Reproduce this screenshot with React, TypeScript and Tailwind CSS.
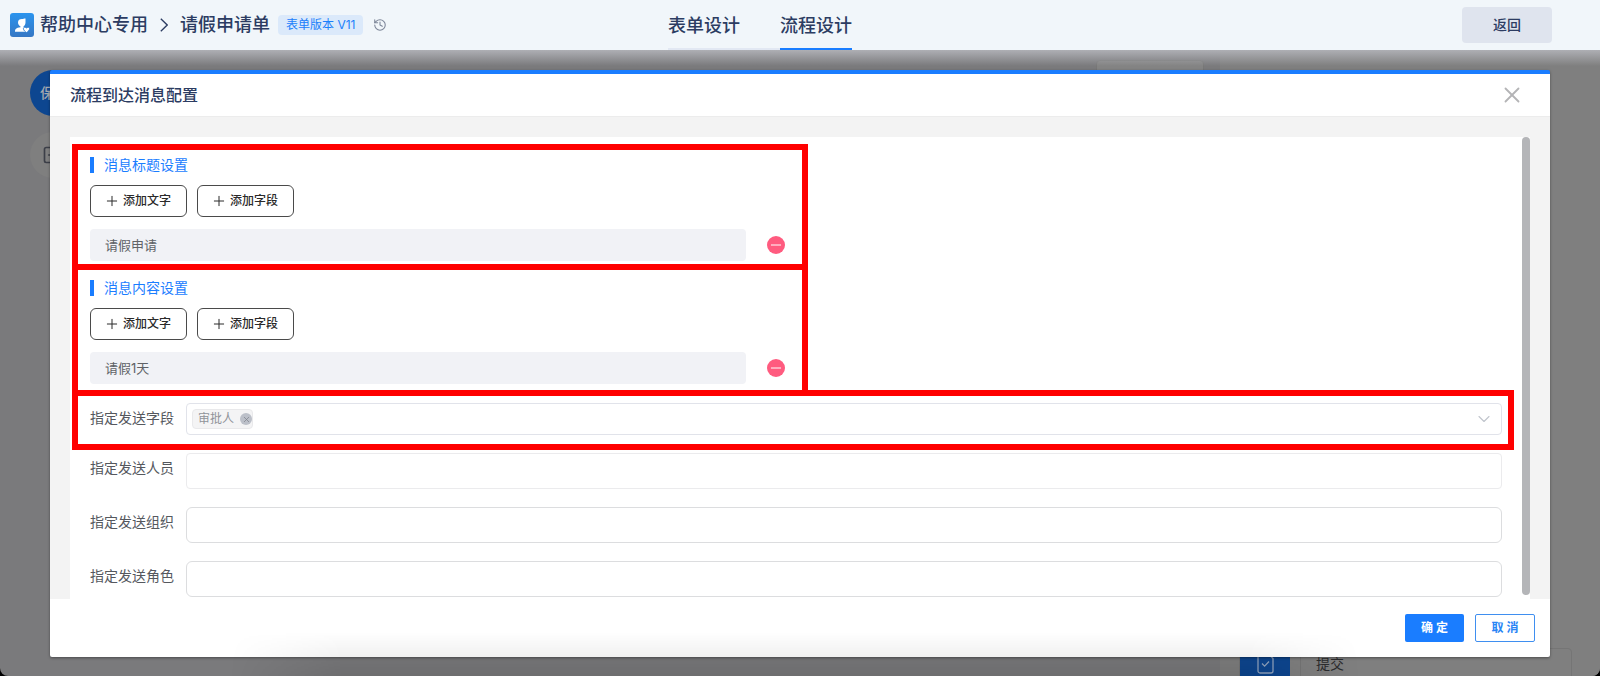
import { useState } from 'react';
import type { ReactNode } from 'react';
import { ChevronDown, History, Minus, Plus, SquareMinus, X } from 'lucide-react';

interface MessageSectionProps {
	title: string;
	value: string;
	className: string;
}

interface FormRowProps {
	id: string;
	label: string;
	children: ReactNode;
}

const tabs = [
	{ label: '表单设计', active: false },
	{ label: '流程设计', active: true },
];

function Logo() {
	return (
		<svg viewBox="0 0 24 24" className="h-6 w-6 shrink-0" aria-hidden="true">
			<defs>
				<linearGradient id="logo" x1="0" y1="0" x2="0" y2="1">
					<stop offset="0" stopColor="#2b94ee" />
					<stop offset="1" stopColor="#3577c4" />
				</linearGradient>
			</defs>
			<rect width="24" height="24" rx="3" fill="url(#logo)" />
			<path
				d="M8 9.5C8 7 9.500 6 12 6c1.500 0 2-.6 3.500-.5v4c0 2-1 3.200-2 3.900v.8c2.500.7 4 1.500 4.500 4.500H5c0-3 1-3.700 5.500-4.500v-.8C9 12.700 8 11.300 8 9.500Z"
				fill="#fff"
			/>
			<path
				d="M16.500 19.500c-5.200-3.400-2.800-6.600 0-4.600 2.800-2 5.200 1.200 0 4.600Z"
				fill="#fff"
				stroke="#3380d2"
				strokeWidth="1"
			/>
		</svg>
	);
}

function BreadcrumbArrow() {
	return (
		<svg viewBox="0 0 8 14" className="mx-3 h-[14px] w-2" fill="none" stroke="currentColor" strokeWidth="1.3">
			<path d="M.8.8 7.200 7 .8 13.200" />
		</svg>
	);
}

function SubmitIcon() {
	return (
		<svg viewBox="0 0 17 21" className="h-[21px] w-[17px]" fill="none" stroke="#8fa3bf" strokeWidth="1.3">
			<path d="M3 1h8.500L16 5.500V18a2 2 0 0 1-2 2H3a2 2 0 0 1-2-2V3a2 2 0 0 1 2-2Z" strokeLinejoin="round" />
			<path d="m5 10.500 2.600 2.600L12 8.500" />
		</svg>
	);
}

function Header() {
	return (
		<header className="relative z-20 grid h-[50px] grid-cols-[1fr_auto_1fr] bg-[#f1f6fa] text-[#2c3c62]">
			<div className="flex items-center pl-[10px] text-lg font-medium">
				<Logo />
				<span className="ml-[6px]">帮助中心专用</span>
				<BreadcrumbArrow />
				<span>请假申请单</span>
				<span className="ml-2 rounded-sm bg-[#dbe9fa] px-2 text-xs leading-5 font-normal text-[#1a80fb]">
					表单版本 V11
				</span>
				<button type="button" aria-label="历史版本" className="ml-[10px]">
					<History className="h-[14px] w-[14px] text-[#7b8497]" strokeWidth={1.8} />
				</button>
			</div>
			<nav className="mr-20 flex text-lg font-medium">
				{tabs.map((tab) => (
					<a
						key={tab.label}
						href="#"
						className={
							tab.active
								? 'border-b-2 border-[#1a7dff] pt-1 leading-11'
								: 'border-b-2 border-[#e2e8f3] pt-1 pr-10 leading-11'
						}>
						{tab.label}
					</a>
				))}
			</nav>
			<div className="flex items-center justify-end pr-12">
				<button type="button" className="h-9 w-[90px] rounded bg-[#dfe4ee] text-sm font-medium">
					返回
				</button>
			</div>
		</header>
	);
}

// Dimmed designer canvas behind the dialog
function Backdrop() {
	return (
		<div className="absolute inset-0 overflow-hidden bg-black" aria-hidden="true">
			<div className="absolute inset-0 overflow-hidden rounded-b-lg bg-[#7a7a7c]">
				<div className="absolute top-[70px] left-[30px] h-[46px] w-[46px] rounded-full bg-[#0d4690] pl-[10px] text-sm leading-[46px] font-medium text-[#a5a9b0]">
					保
				</div>
				<div className="absolute top-[132px] left-[30px] flex h-[46px] w-[46px] items-center rounded-full bg-[#7f7f7f] pl-3">
					<SquareMinus className="h-5 w-5 text-[#3c3f48]" strokeWidth={2} />
				</div>
				<div className="absolute top-[60px] left-[1096px] h-10 w-[108px] rounded border border-[#777] bg-[#838383]" />
				<div className="absolute top-[50px] right-0 bottom-0 w-[380px] bg-[#7f7f7f]">
					<div className="absolute right-[28px] -bottom-2 flex h-9 w-[333px] rounded border border-[#757575]">
						<span className="flex w-[50px] justify-center bg-[#0d4690] pt-1">
							<SubmitIcon />
						</span>
						<span className="ml-[10px] flex-1 border-l border-[#757575] pl-[15px] text-sm leading-[30px] text-[#2c2c2e]">
							提交
						</span>
					</div>
				</div>
				<div className="absolute inset-x-0 top-[50px] h-4 bg-linear-to-b from-[#aeafb4] to-transparent" />
			</div>
		</div>
	);
}

function AddButton({ label }: { label: string }) {
	return (
		<button
			type="button"
			className="flex h-8 w-[97px] items-center justify-center gap-[3px] rounded-md border border-[#4a4a4a] pr-[2px] text-xs font-medium text-[#2a2a2a]">
			<Plus className="h-4 w-4" strokeWidth={1.5} />
			{label}
		</button>
	);
}

function MessageSection({ title, value, className }: MessageSectionProps) {
	return (
		<section className={`w-[calc(50%+15px)] border-6 border-[#f00] pr-[17px] pl-3 ${className}`}>
			<h3 className="border-l-4 border-[#1a7dff] pl-[10px] text-sm leading-4 text-[#1a7dff]">{title}</h3>
			<div className="mt-3 flex gap-[10px]">
				<AddButton label="添加文字" />
				<AddButton label="添加字段" />
			</div>
			<div className="mt-3 flex items-center gap-[21px]">
				<input
					aria-label={title}
					defaultValue={value}
					className="h-8 min-w-0 flex-1 rounded bg-[#f1f2f6] px-[15px] pb-0.5 text-[13px] text-[#606266]"
				/>
				<button
					type="button"
					aria-label="删除"
					className="flex h-[18px] w-[18px] items-center justify-center rounded-full bg-[#ff5b7f] text-white">
					<Minus className="h-4 w-4" strokeWidth={1.5} />
				</button>
			</div>
		</section>
	);
}

function FormRow({ id, label, children }: FormRowProps) {
	return (
		<div className="flex items-start">
			<label htmlFor={id} className="w-24 shrink-0 text-sm leading-[30px] text-[#55585e]">
				{label}
			</label>
			{children}
		</div>
	);
}

function MessageDialog() {
	const [fields, setFields] = useState(['审批人']);

	return (
		<div
			role="dialog"
			aria-labelledby="dialog-title"
			className="relative z-10 mx-[50px] mt-5 rounded-xs border-t-4 border-[#1a7dff] bg-white shadow-[0_1px_3px_rgba(0,0,0,0.4)]">
			<div className="flex h-[42px] items-center justify-between pr-[25px] pl-5">
				<h2 id="dialog-title" className="text-base font-medium text-[#2c3c62]">
					流程到达消息配置
				</h2>
				<button type="button" aria-label="关闭">
					<X className="h-[26px] w-[26px] text-[#b4b4b6]" strokeWidth={1.7} />
				</button>
			</div>

			<div className="border-t border-[#ececec] bg-[#f3f3f3] px-5 pt-5">
				<div className="flex bg-white">
					<div className="min-w-0 flex-1 pt-[7px] pr-2 pb-[2px] pl-[2px]">
						<MessageSection title="消息标题设置" value="请假申请" className="pt-[7px] pb-[3px]" />
						<MessageSection title="消息内容设置" value="请假1天" className="-mt-[6px] pt-[10px] pb-[6px]" />
						<div className="-mt-[6px] border-6 border-[#f00] pt-[7px] pr-[6px] pb-[9px] pl-3">
							<FormRow id="send-field" label="指定发送字段">
								<button
									type="button"
									id="send-field"
									onClick={() => setFields(['审批人'])}
									className="flex h-8 flex-1 items-center rounded border border-[#e1e3ea] pr-[7px] pl-[5px]">
									{fields.map((field) => (
										<span
											key={field}
											className="flex h-5 items-center gap-[6px] rounded border border-[#e9e9eb] bg-[#f4f4f5] pl-[5px] text-xs text-[#909399]">
											{field}
											<span className="flex h-3 w-3 items-center justify-center rounded-full bg-[#bcc0c9]">
												<X className="h-[9px] w-[9px] text-[#7f838c]" strokeWidth={2} />
											</span>
										</span>
									))}
									<ChevronDown className="ml-auto h-5 w-5 text-[#c0c4cc]" strokeWidth={1.3} />
								</button>
							</FormRow>
						</div>
						<div className="mt-[3px] flex flex-col gap-[18px] pr-3 pl-[18px]">
							<FormRow id="send-user" label="指定发送人员">
								<input id="send-user" className="h-9 min-w-0 flex-1 rounded border border-[#ebebed] px-3 text-sm" />
							</FormRow>
							<FormRow id="send-org" label="指定发送组织">
								<input id="send-org" className="h-9 min-w-0 flex-1 rounded-md border border-[#dcdddf] px-3 text-sm" />
							</FormRow>
							<FormRow id="send-role" label="指定发送角色">
								<input id="send-role" className="h-9 min-w-0 flex-1 rounded-md border border-[#dcdddf] px-3 text-sm" />
							</FormRow>
						</div>
					</div>
					<div className="w-2 pb-1">
						<div className="h-full rounded-full bg-[#b4b5b8]" />
					</div>
				</div>
			</div>

			<div className="flex h-[58px] items-center justify-end gap-[11px] pr-[15px]">
				<button type="button" className="h-7 w-[59px] rounded-xs bg-[#1a7dff] text-xs font-bold text-white">
					确 定
				</button>
				<button
					type="button"
					className="h-7 w-[60px] rounded-xs border border-[#3f8ff0] text-xs font-bold text-[#2a85f5]">
					取 消
				</button>
			</div>
		</div>
	);
}

export default function App() {
	return (
		<div className="relative min-h-screen overflow-hidden pb-[19px] font-['Inter','Noto_Sans_CJK_SC',sans-serif]">
			<Backdrop />
			<Header />
			<MessageDialog />
			<div className="pointer-events-none absolute right-[240px] bottom-0 left-[230px] z-30 h-11 bg-linear-to-t from-black/10 to-transparent [mask-image:linear-gradient(to_right,transparent,black_10%,black_90%,transparent)]" />
		</div>
	);
}
